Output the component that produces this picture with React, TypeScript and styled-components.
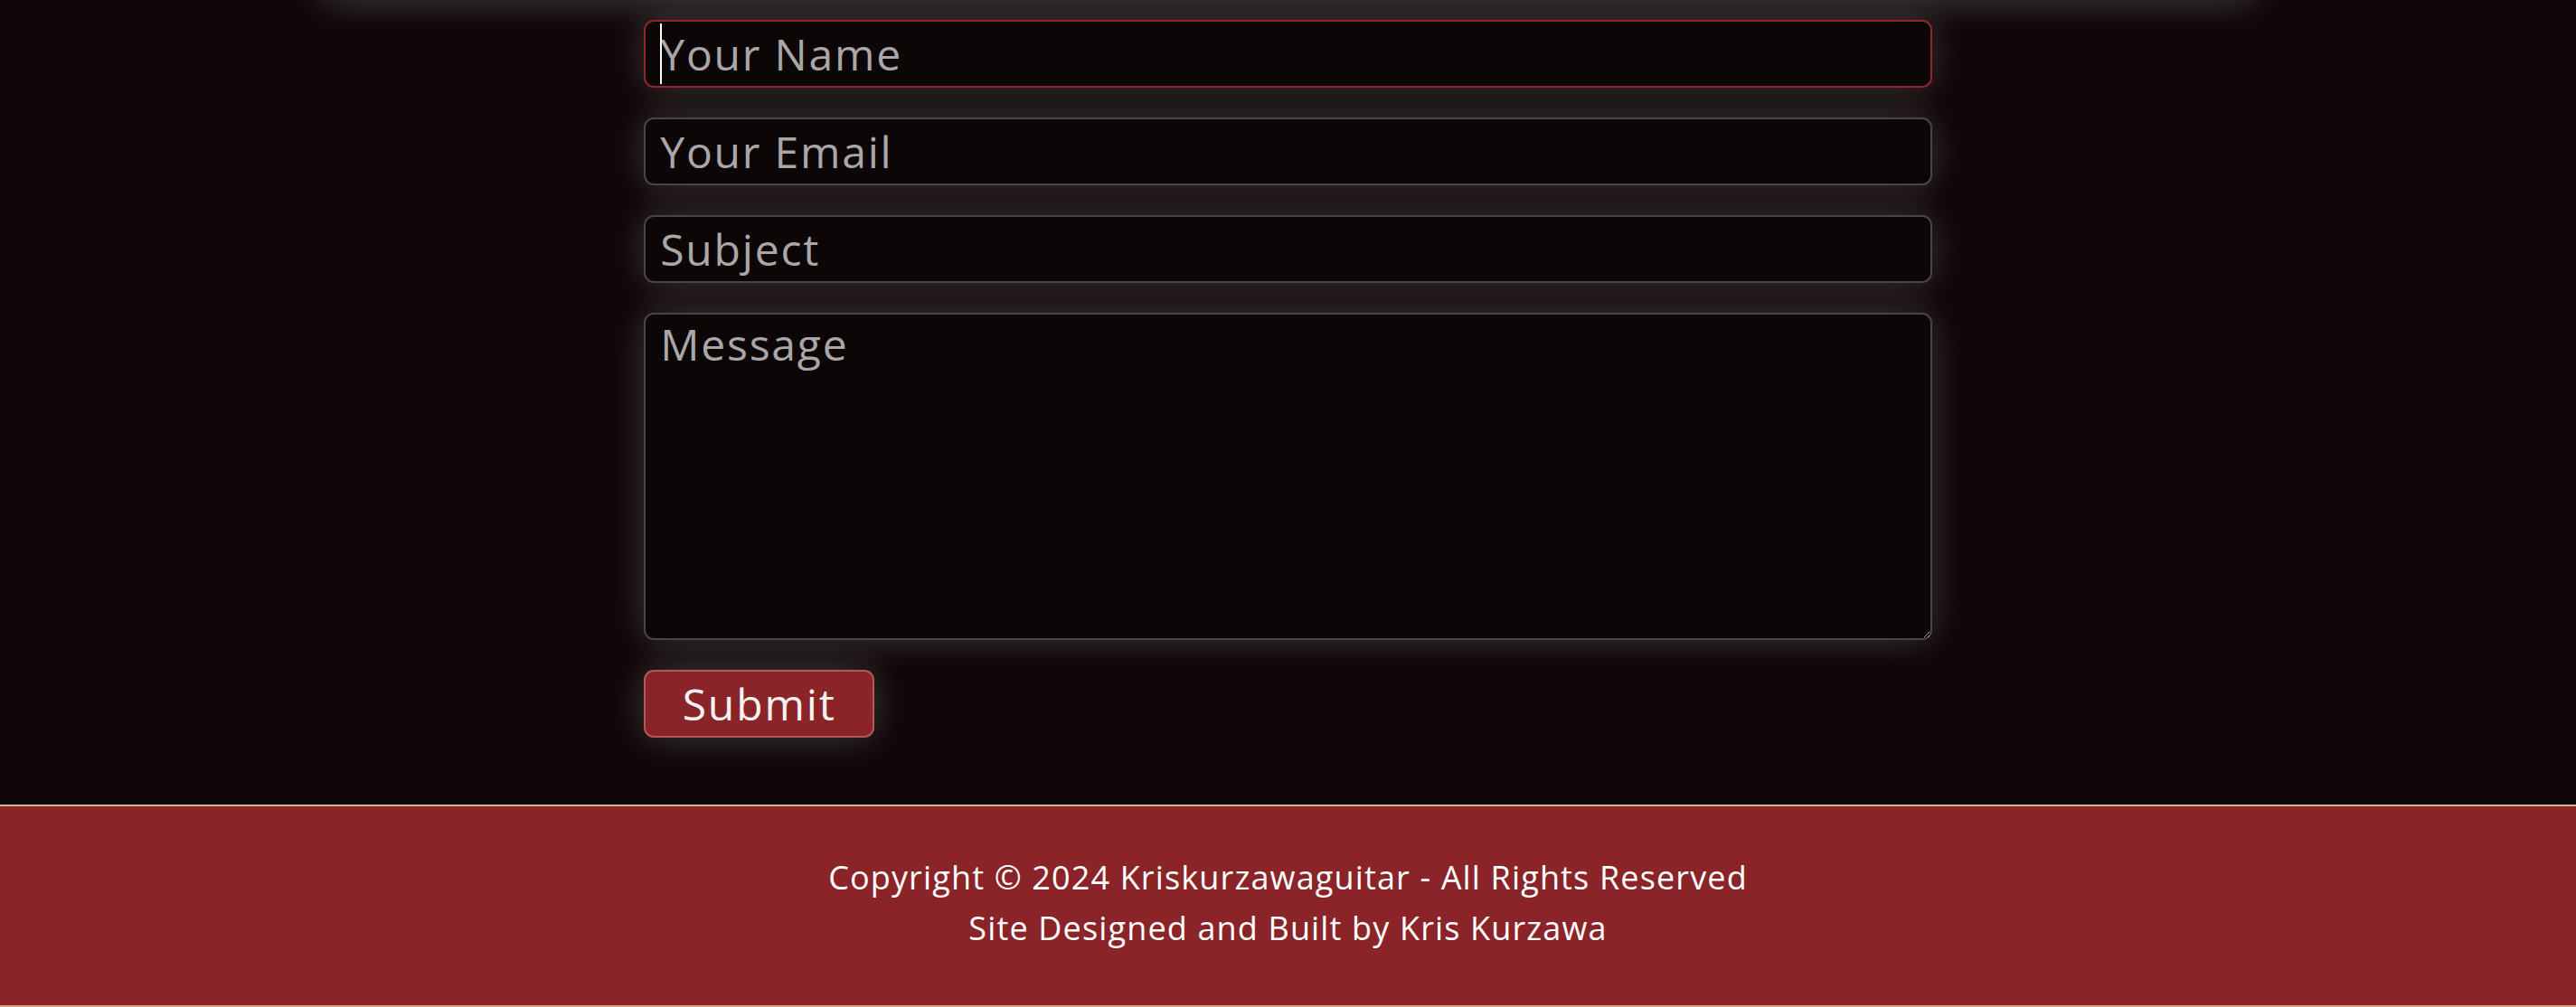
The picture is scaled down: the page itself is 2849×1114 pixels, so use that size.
import React from "react";
import styled, { createGlobalStyle } from "styled-components";

const GlobalStyle = createGlobalStyle`
  html, body {
    margin: 0;
    padding: 0;
    background: #0e0607;
  }
  body {
    font-family: "Open Sans", "Liberation Sans", sans-serif;
  }
  * { box-sizing: border-box; }
`;

const Page = styled.div`
  min-height: 100vh;
  background: #0e0607;
  display: flex;
  flex-direction: column;
`;

const ContactSection = styled.section`
  position: relative;
  padding: 22px 0 74px;

  &::before {
    content: "";
    position: absolute;
    top: -60px;
    left: 12.5%;
    width: 75%;
    height: 60px;
    box-shadow: 0 0 44px rgba(255, 255, 255, 0.24);
    pointer-events: none;
  }
`;

const Form = styled.form`
  width: 50%;
  margin: 0 auto;
  display: flex;
  flex-direction: column;
  align-items: flex-start;
  gap: 33px;
`;

const FieldWrap = styled.div`
  position: relative;
  width: 100%;
`;

const Caret = styled.span`
  position: absolute;
  left: 18px;
  top: 4px;
  width: 2px;
  height: 67px;
  background: #ffffff;
  pointer-events: none;
`;

const fieldBase = `
  display: block;
  width: 100%;
  background: #0d0607;
  border-radius: 11px;
  font-family: "Open Sans", "Liberation Sans", sans-serif;
  font-size: 48px;
  color: #e8e4e4;
  caret-color: #ffffff;
  outline: none;
  box-shadow: 0 0 40px rgba(255, 255, 255, 0.2);
  letter-spacing: 1.8px;
  &::placeholder {
    color: #a9a7a7;
    opacity: 1;
  }
`;

const TextField = styled.input<{ $active?: boolean }>`
  ${fieldBase}
  height: 75px;
  padding: 0 16px;
  border: 2px solid ${(p) => (p.$active ? "#8f2629" : "#4a4545")};
`;

const MessageField = styled.textarea`
  ${fieldBase}
  height: 362px;
  padding: 0 16px;
  line-height: normal;
  border: 2px solid #4a4545;
  resize: both;
`;

const SubmitButton = styled.button`
  width: 255px;
  height: 75px;
  background: #8b2428;
  border: 2px solid #b25a57;
  border-radius: 11px;
  color: #f6f2f2;
  font-family: "Open Sans", "Liberation Sans", sans-serif;
  font-size: 48px;
  letter-spacing: 1.9px;
  cursor: pointer;
  box-shadow: 0 0 40px rgba(255, 255, 255, 0.22);
  padding: 0;
`;

const Footer = styled.footer`
  background: #8a2428;
  border-top: 2px solid #d4b28e;
  border-bottom: 2px solid #d6a27e;
  padding: 51px 0 57px;
  display: flex;
  flex-direction: column;
  align-items: center;
`;

const FooterLine = styled.p`
  margin: 0;
  color: #ffffff;
  font-family: "Open Sans", "Liberation Sans", sans-serif;
  font-size: 36px;
  letter-spacing: 1.15px;
  line-height: 56px;
  text-align: center;
`;

export default function App() {
  return (
    <Page>
      <GlobalStyle />
      <ContactSection>
        <Form onSubmit={(e) => e.preventDefault()}>
          <FieldWrap>
            <TextField type="text" placeholder="Your Name" $active />
            <Caret />
          </FieldWrap>
          <TextField type="email" placeholder="Your Email" />
          <TextField type="text" placeholder="Subject" />
          <MessageField placeholder="Message" />
          <SubmitButton type="submit">Submit</SubmitButton>
        </Form>
      </ContactSection>
      <Footer>
        <FooterLine>Copyright © 2024 Kriskurzawaguitar - All Rights Reserved</FooterLine>
        <FooterLine>Site Designed and Built by Kris Kurzawa</FooterLine>
      </Footer>
    </Page>
  );
}
